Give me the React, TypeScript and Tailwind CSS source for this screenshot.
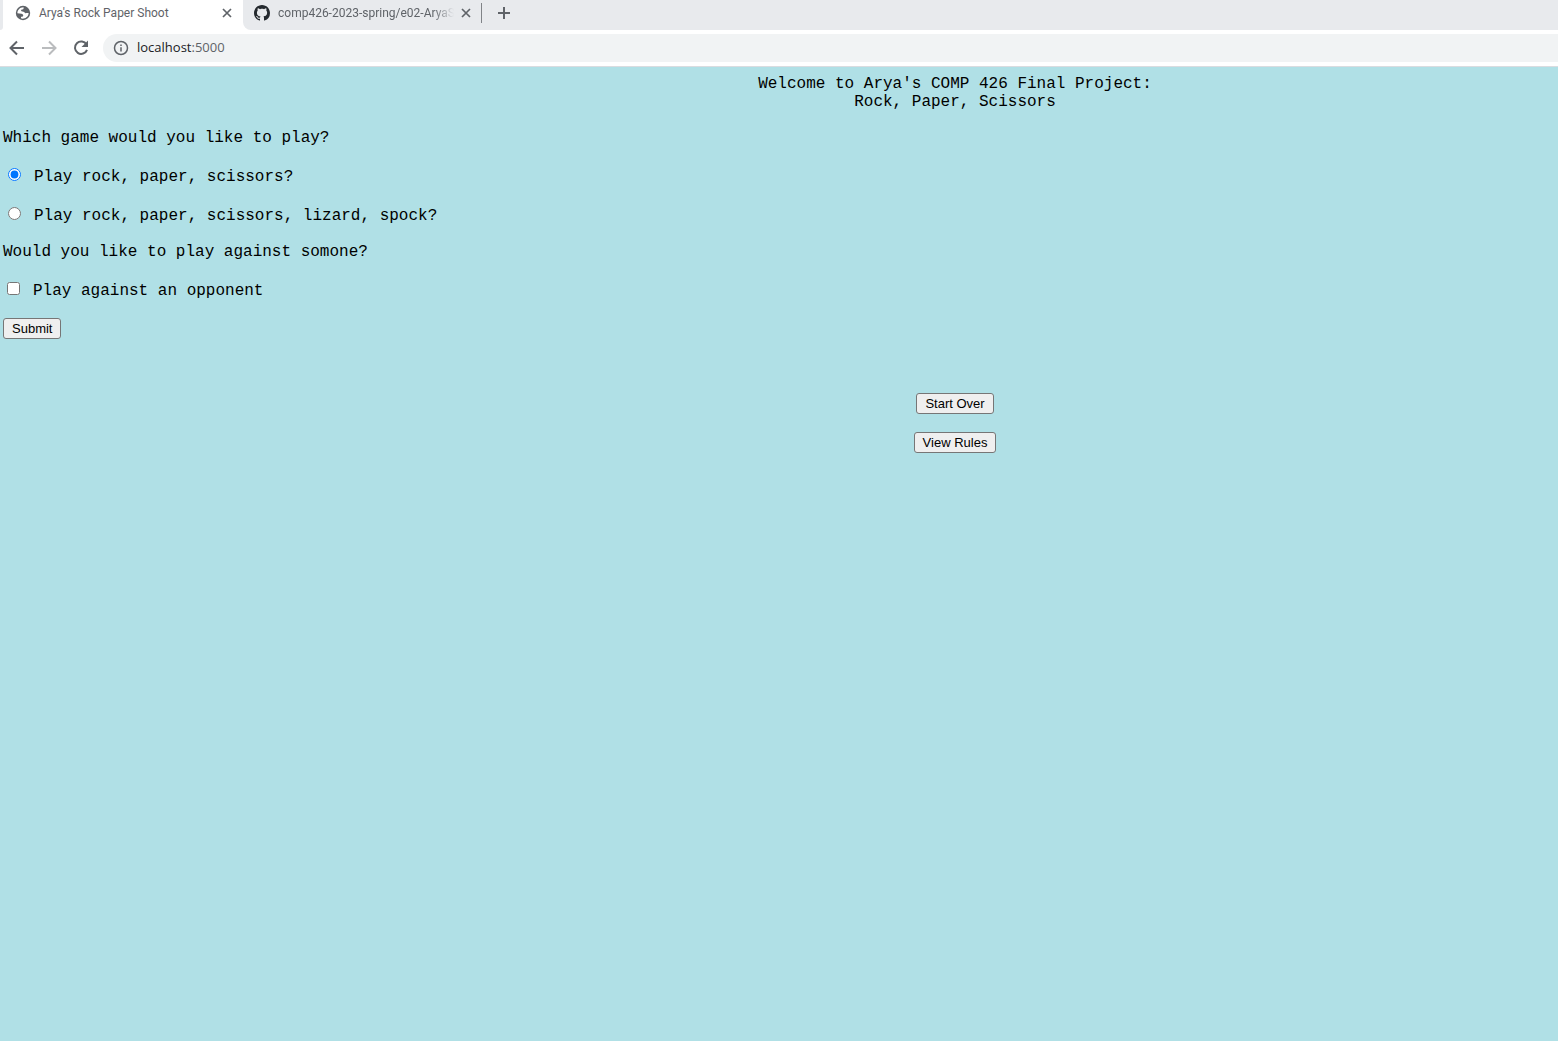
import type { ButtonHTMLAttributes } from "react";

function CloseIcon() {
  return (
    <svg viewBox="0 0 16 16" className="size-4" stroke="#5f6368" strokeWidth="1.7" fill="none" aria-hidden="true">
      <path d="M4 4l8 8M12 4l-8 8" />
    </svg>
  );
}

function GlobeIcon() {
  return (
    <svg viewBox="0 0 16 16" className="size-4 shrink-0" aria-hidden="true">
      <circle cx="8" cy="8" r="7.2" fill="#5f6368" />
      <path
        d="M8.6 2.2C8.4 3.2 8.9 3.7 8.1 4.3C7.3 4.9 6.4 4.3 6.1 5.3C5.8 6.3 7 6.6 8.4 6.7C9.7 6.8 9.6 8.2 10.6 8.2C11.5 8.2 12.2 7.9 13.6 8.1C13.6 10.9 11.4 13.3 8.6 13.6C7.4 13.7 6.6 13.5 6 13.3V11.9C6.8 11.8 8 11.8 8.2 10.8C8.4 9.7 7.6 9 6.4 8.8C5 8.5 3.9 8.4 2.4 8.2C2.3 5.2 5 2.1 8.6 2.2Z"
        fill="#fff"
      />
    </svg>
  );
}

function GitHubIcon() {
  return (
    <svg viewBox="0 0 16 16" className="size-4 shrink-0" fill="#24292e" aria-hidden="true">
      <path d="M8 0C3.58 0 0 3.58 0 8c0 3.54 2.29 6.53 5.47 7.59.4.07.55-.17.55-.38 0-.19-.01-.82-.01-1.49-2.01.37-2.53-.49-2.69-.94-.09-.23-.48-.94-.82-1.13-.28-.15-.68-.52-.01-.53.63-.01 1.08.58 1.23.82.72 1.21 1.87.87 2.33.66.07-.52.28-.87.51-1.07-1.78-.2-3.64-.89-3.64-3.95 0-.87.31-1.59.82-2.15-.08-.2-.36-1.02.08-2.12 0 0 .67-.21 2.2.82.64-.18 1.32-.27 2-.27s1.36.09 2 .27c1.53-1.04 2.2-.82 2.2-.82.44 1.1.16 1.92.08 2.12.51.56.82 1.27.82 2.15 0 3.07-1.87 3.75-3.65 3.95.29.25.54.73.54 1.48 0 1.07-.01 1.93-.01 2.2 0 .21.15.46.55.38A8.01 8.01 0 0 0 16 8c0-4.42-3.58-8-8-8z" />
    </svg>
  );
}

function TabStrip() {
  return (
    <div className="flex h-[30px] bg-white font-[Roboto,'Open_Sans',sans-serif] text-xs text-[#5f6368]">
      <div className="w-[3px] rounded-br-lg bg-[#e8eaed]" />
      <div className="flex h-[26px] w-[240px] items-center pl-3">
        <GlobeIcon />
        <span className="ml-2 flex-1 whitespace-nowrap">Arya's Rock Paper Shoot</span>
        <button type="button" aria-label="Close tab" className="mr-2">
          <CloseIcon />
        </button>
      </div>
      <div className="flex flex-1 rounded-bl-lg bg-[#e8eaed]">
        <div className="flex h-[26px] w-[238px] items-center pl-[11px]">
          <GitHubIcon />
          <span className="ml-2 w-[176px] whitespace-nowrap mask-r-from-88% mask-r-to-100%">
            comp426-2023-spring/e02-AryaS
          </span>
          <button type="button" aria-label="Close tab" className="ml-1">
            <CloseIcon />
          </button>
        </div>
        <div className="mt-[3px] h-5 w-px bg-[#808387]" />
        <button type="button" aria-label="New tab" className="ml-3.5 flex h-[26px] items-center">
          <svg viewBox="0 0 16 16" className="size-4" stroke="#5f6368" strokeWidth="2" aria-hidden="true">
            <path d="M8 2v12M2 8h12" />
          </svg>
        </button>
      </div>
    </div>
  );
}

function Toolbar() {
  return (
    <div className="flex h-[37px] items-center border-b border-[#dadce0] bg-white pl-2">
      <button type="button" aria-label="Back">
        <svg viewBox="0 0 18 18" className="size-[18px]" stroke="#5f6368" strokeWidth="2" fill="none" aria-hidden="true">
          <path d="M16 9H3M9 2.5L2.5 9L9 15.5" />
        </svg>
      </button>
      <button type="button" aria-label="Forward" className="ml-3.5" disabled>
        <svg viewBox="0 0 18 18" className="size-[18px]" stroke="#babcbe" strokeWidth="2" fill="none" aria-hidden="true">
          <path d="M2 9h13M9 2.5L15.5 9L9 15.5" />
        </svg>
      </button>
      <button type="button" aria-label="Reload" className="ml-3.5">
        <svg viewBox="0 0 18 18" className="size-[18px]" aria-hidden="true">
          <path d="M14.5 5.5A6.2 6.2 0 1 0 15 10.8" stroke="#5f6368" strokeWidth="2" fill="none" />
          <path d="M16 1.5V8H9.5z" fill="#5f6368" />
        </svg>
      </button>
      <div className="ml-[13px] flex h-7 flex-1 items-center rounded-l-full bg-[#f1f3f4] pl-2.5">
        <svg viewBox="0 0 16 16" className="size-4" fill="none" stroke="#5f6368" strokeWidth="1.5" aria-hidden="true">
          <circle cx="8" cy="8" r="6.5" />
          <path d="M8 7.2v4.3M8 4.4v1.6" />
        </svg>
        <span className="ml-2 font-['Open_Sans','Noto_Sans',sans-serif] text-[13px] text-[#202124]">
          localhost<span className="text-[#5f6368]">:5000</span>
        </span>
      </div>
    </div>
  );
}

function PushButton(props: ButtonHTMLAttributes<HTMLButtonElement>) {
  return (
    <button
      type="button"
      className="block h-[21px] rounded-[3px] border border-[#767676] bg-[#efefef] px-2 font-['Liberation_Sans',Arial,sans-serif] text-[13px] leading-[19px] text-black"
      {...props}
    />
  );
}

export default function App() {
  return (
    <div className="flex min-h-screen flex-col bg-[#b0e0e6]">
      <header>
        <TabStrip />
        <Toolbar />
      </header>
      <main className="px-[3px] pt-2 font-['Liberation_Mono','Courier_New',monospace] text-base leading-[18px] text-black">
        <h1 className="pl-[352px] text-center">
          Welcome to Arya's COMP 426 Final Project:
          <br />
          Rock, Paper, Scissors
        </h1>
        <form className="mt-[18px]" onSubmit={(e) => e.preventDefault()}>
          <p>Which game would you like to play?</p>
          <div className="mt-[21px] flex items-start">
            <input id="classic" type="radio" name="game" defaultChecked className="ml-[5px] size-[13px]" />
            <label htmlFor="classic" className="ml-[13px]">Play rock, paper, scissors?</label>
          </div>
          <div className="mt-[21px] flex items-start">
            <input id="extended" type="radio" name="game" className="ml-[5px] size-[13px]" />
            <label htmlFor="extended" className="ml-[13px]">Play rock, paper, scissors, lizard, spock?</label>
          </div>
          <p className="mt-[18px]">Would you like to play against somone?</p>
          <div className="mt-[21px] flex items-start">
            <input id="opponent" type="checkbox" className="ml-1 size-[13px]" />
            <label htmlFor="opponent" className="ml-[13px]">Play against an opponent</label>
          </div>
          <div className="mt-[18px]">
            <PushButton type="submit">Submit</PushButton>
          </div>
        </form>
        <div className="mt-[54px] flex flex-col items-center gap-[18px] pl-[352px]">
          <PushButton>Start Over</PushButton>
          <PushButton>View Rules</PushButton>
        </div>
      </main>
    </div>
  );
}
